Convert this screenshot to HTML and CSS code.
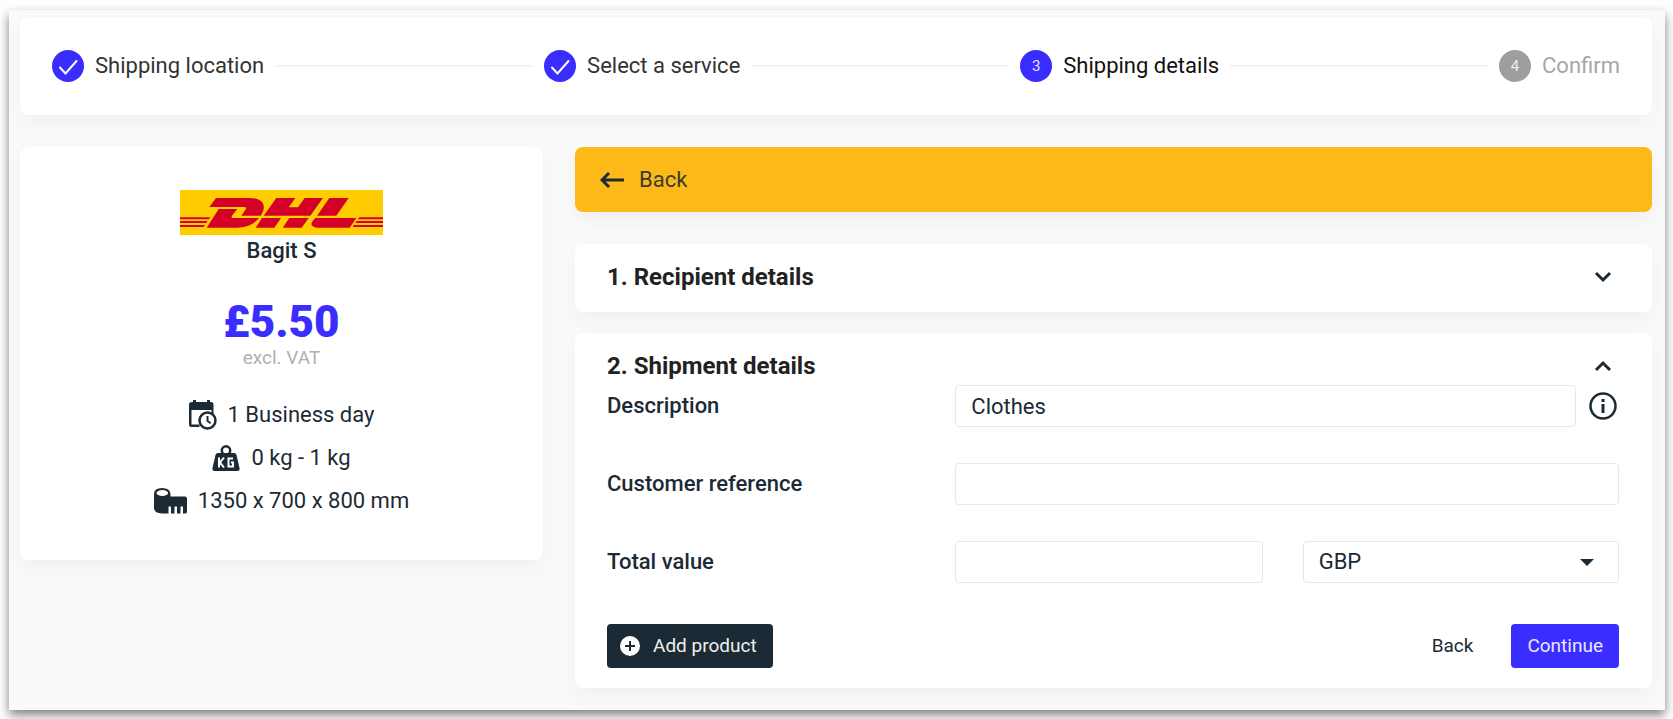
FILE: index.html
```html
<!DOCTYPE html>
<html lang="en">
<head>
<meta charset="utf-8">
<meta name="viewport" content="width=device-width, initial-scale=1">
<title>Shipping details</title>
<link rel="stylesheet" href="styles.css">
</head>
<body>
<main class="panel">
  <ol class="card steps">
    <li class="step">
      <span class="badge"><svg class="tick" viewBox="0 0 32 32" aria-hidden="true"><path d="M8 17.500l5.500 6L24.500 11"/></svg></span>
      <span>Shipping location</span>
    </li>
    <li class="rule" aria-hidden="true"></li>
    <li class="step">
      <span class="badge"><svg class="tick" viewBox="0 0 32 32" aria-hidden="true"><path d="M8 17.500l5.500 6L24.500 11"/></svg></span>
      <span>Select a service</span>
    </li>
    <li class="rule" aria-hidden="true"></li>
    <li class="step step-current" aria-current="step">
      <span class="badge">3</span>
      <span>Shipping details</span>
    </li>
    <li class="rule" aria-hidden="true"></li>
    <li class="step step-pending">
      <span class="badge">4</span>
      <span>Confirm</span>
    </li>
  </ol>

  <div class="columns">
    <aside class="card summary">
      <svg class="logo" viewBox="0 0 609 135" role="img" aria-label="DHL">
        <rect width="609" height="135" fill="#fc0"/>
        <g fill="#d40026">
          <path d="M108 24H208C250 24 262 48 242 77H184L197 58Q201 51 193 51H88Z"/>
          <path d="M116 57H172L156 77Q152 84 160 84H237Q214 113 170 113H80Z"/>
          <path d="M289 24H346L326 52H354L374 24H429L391 77H251Z"/>
          <path d="M246 84H303L283 113H227ZM328 84H386L365 113H308Z"/>
          <path d="M448 24H506L469 77H411Z"/>
          <path d="M406 84H529L509 113H412Q380 109 406 84Z"/>
          <path d="M0 82H91L87 88H0ZM0 93H83L79 99H0ZM0 105H75L71 111H0Z"/>
          <path d="M538 82H609V88H534ZM530 93H609V99H526ZM522 105H609V111H518Z"/>
        </g>
      </svg>
      <h1 class="service">Bagit S</h1>
      <p class="price">£5.50</p>
      <p class="vat">excl. VAT</p>
      <ul class="facts">
        <li>
          <svg class="icon-day" viewBox="0 0 28 30" aria-hidden="true">
            <path d="M3 2h1V0h3v2h11V0h3v2h1q2.500 0 2.500 2.500V14H22.500V10H2.500V24.500h8V27H2.500Q0 27 0 24.500V4.500Q0 2 3 2Z"/>
            <circle cx="18.500" cy="20.500" r="8" class="ring"/>
            <path d="M18.500 16v5l3.200 2.200" class="hand"/>
          </svg>
          <span>1 Business day</span>
        </li>
        <li>
          <svg class="icon-kg" viewBox="0 0 28 26" aria-hidden="true">
            <circle cx="14" cy="5.500" r="4.200" class="loop"/>
            <path d="M6 8H22Q24 8 24.500 10L27.500 23Q28 26 25.500 26H2.500Q0 26 .5 23L3.500 10Q4 8 6 8Z"/>
            <path d="M7 12.500v10M12 12.500l-4 5 4 5M21 13.500h-4.500v8H21v-4h-2" class="mark"/>
          </svg>
          <span>0 kg - 1 kg</span>
        </li>
        <li>
          <svg class="icon-tape" viewBox="0 0 33 26" aria-hidden="true">
            <path d="M0 6Q0 0 8 0T16.500 6V8.500H31Q33 8.500 33 10.500V24Q33 25.500 31 25.500H29V18.500H26.500V25.500H23V18.500H20.500V25.500H17V18.500H14.500V25.500H8Q0 25 0 20Z"/>
            <ellipse cx="8.300" cy="5" rx="5.800" ry="3" fill="#fff"/>
          </svg>
          <span>1350 x 700 x 800 mm</span>
        </li>
      </ul>
    </aside>

    <div class="content">
      <button type="button" class="back-bar">
        <svg class="arrow" viewBox="0 0 25 18" aria-hidden="true"><path d="M24 9H2M9 2L2 9l7 7"/></svg>
        <span>Back</span>
      </button>

      <section class="card section">
        <h2><button type="button" class="section-head" aria-expanded="false">
          <span>1. Recipient details</span>
          <svg class="chevron" viewBox="0 0 18 12" aria-hidden="true"><path d="M2 2l7 7 7-7"/></svg>
        </button></h2>
      </section>

      <section class="card section section-open">
        <h2><button type="button" class="section-head" aria-expanded="true">
          <span>2. Shipment details</span>
          <svg class="chevron" viewBox="0 0 18 12" aria-hidden="true"><path d="M2 10l7-7 7 7"/></svg>
        </button></h2>
        <form class="form">
          <div class="row">
            <label for="description">Description</label>
            <div class="field">
              <input id="description" class="control" type="text" value="Clothes">
              <button type="button" class="info" aria-label="About the description">
                <svg viewBox="0 0 28 28" aria-hidden="true"><circle cx="14" cy="14" r="12.500"/><path d="M14 12v9M14 7v3" class="letter"/></svg>
              </button>
            </div>
          </div>
          <div class="row">
            <label for="reference">Customer reference</label>
            <div class="field"><input id="reference" class="control" type="text"></div>
          </div>
          <div class="row">
            <label for="total">Total value</label>
            <div class="field field-split">
              <input id="total" class="control" type="text">
              <div class="select">
                <select id="currency" class="control" aria-label="Currency"><option>GBP</option></select>
                <svg class="caret" viewBox="0 0 14 7" aria-hidden="true"><path d="M0 0h14L7 7z"/></svg>
              </div>
            </div>
          </div>
          <div class="actions">
            <button type="button" class="btn btn-dark">
              <svg class="plus" viewBox="0 0 20 20" aria-hidden="true"><circle cx="10" cy="10" r="10"/><path d="M10 5v10M5 10h10"/></svg>
              <span>Add product</span>
            </button>
            <button type="button" class="btn btn-plain">Back</button>
            <button type="submit" class="btn btn-primary">Continue</button>
          </div>
        </form>
      </section>
    </div>
  </div>
</main>
</body>
</html>
```
FILE: styles.css
```css
:root {
  --blue: #3a2dff;
  --ink: #1c2a35;
  --line: #e8e8e8;
}

* {
  box-sizing: border-box;
}

body {
  margin: 0;
  padding: 10px 8px 9px 9px;
  background: #fff;
  color: var(--ink);
  font: 400 22px/28px Roboto, "Liberation Sans", sans-serif;
}

h1, h2, p, ul, ol {
  margin: 0;
  padding: 0;
  list-style: none;
}

button, input, select {
  font: inherit;
  color: inherit;
}

button {
  border: 0;
  background: none;
  cursor: pointer;
}

svg {
  display: block;
  flex: none;
}

.panel {
  padding: 7px 13px 22px 11px;
  background: #fafafa;
  box-shadow: 0 5px 10px rgba(0, 0, 0, .5);
}

.card {
  border-radius: 8px;
  background: #fff;
  box-shadow: 0 8px 20px rgba(20, 60, 50, .05);
}

/* Progress steps */
.steps {
  display: flex;
  align-items: center;
  gap: 11px;
  padding: 33px 32px;
  color: #333;
}

.step {
  display: flex;
  align-items: center;
  gap: 11px;
  line-height: 32px;
}

.step-current {
  color: #111;
}

.step-pending {
  color: #a6a6a6;
}

.badge {
  width: 32px;
  height: 32px;
  border-radius: 50%;
  background: var(--blue);
  color: #e4e2ff;
  font-size: 15px;
  text-align: center;
}

.step-pending .badge {
  background: #9e9e9e;
  color: #eee;
}

.tick path {
  fill: none;
  stroke: #fff;
  stroke-width: 2;
  stroke-linecap: round;
}

.rule {
  flex: 1;
  height: 2px;
  background: #f3f3f3;
}

/* Columns */
.columns {
  display: grid;
  grid-template-columns: 523fr 1077fr;
  align-items: start;
  gap: 32px;
  margin-top: 32px;
}

/* Service summary */
.summary {
  display: flex;
  flex-direction: column;
  align-items: center;
  padding: 43px 20px;
}

.logo {
  width: 203px;
  height: 45px;
}

.service {
  margin-top: 2px;
  font-size: 22px;
  font-weight: 500;
  line-height: 28px;
}

.price {
  margin-top: 33px;
  color: var(--blue);
  font-size: 44px;
  font-weight: 900;
  line-height: 48px;
}

.vat {
  color: #b0b0b0;
  font-size: 19px;
  line-height: 24px;
}

.facts {
  display: grid;
  gap: 11px;
  margin-top: 29px;
}

.facts li {
  display: flex;
  align-items: center;
  justify-content: center;
  gap: 11px;
  height: 32px;
}

.facts svg {
  fill: var(--ink);
}

.icon-day {
  width: 28px;
  height: 30px;
}

.icon-kg {
  width: 28px;
  height: 26px;
}

.icon-tape {
  width: 33px;
  height: 26px;
}

.icon-day .ring {
  fill: #fff;
  stroke: var(--ink);
  stroke-width: 2.500;
}

.icon-day .hand {
  fill: none;
  stroke: var(--ink);
  stroke-width: 2;
}

.icon-kg .loop {
  fill: none;
  stroke: var(--ink);
  stroke-width: 2.500;
}

.icon-kg .mark {
  fill: none;
  stroke: #fff;
  stroke-width: 2;
}

/* Main content */
.back-bar {
  display: flex;
  align-items: center;
  gap: 14px;
  width: 100%;
  height: 65px;
  padding: 0 25px;
  border-radius: 8px;
  background: #fdb917;
  box-shadow: 0 8px 20px rgba(0, 0, 0, .05);
  color: #3a3d2f;
}

.arrow {
  width: 25px;
  height: 18px;
  fill: none;
  stroke: var(--ink);
  stroke-width: 3;
}

.section {
  margin-top: 32px;
}

.section-open {
  margin-top: 21px;
}

.section-head {
  display: flex;
  align-items: center;
  justify-content: space-between;
  width: 100%;
  padding: 19px 40px 21px 32px;
  color: #222;
  font-size: 24px;
  font-weight: 700;
  line-height: 28px;
  text-align: left;
}

.section-open .section-head {
  padding-bottom: 5px;
}

.chevron {
  width: 18px;
  height: 12px;
  fill: none;
  stroke: var(--ink);
  stroke-width: 3;
}

.form {
  display: grid;
  gap: 36px;
  padding: 0 33px 20px 32px;
}

.row {
  display: grid;
  grid-template-columns: 348fr 663fr;
  align-items: center;
}

.row label {
  font-weight: 500;
}

.field {
  display: flex;
  align-items: center;
  gap: 13px;
}

.field-split {
  display: grid;
  grid-template-columns: 307fr 316fr;
  gap: 40px;
}

.control {
  width: 100%;
  min-width: 0;
  height: 42px;
  padding: 0 15px;
  border: 1px solid var(--line);
  border-radius: 4px;
  background: #fff;
}

.info {
  padding: 0 2px 0 0;
}

.info svg {
  width: 28px;
  height: 28px;
  fill: none;
  stroke: var(--ink);
  stroke-width: 2.500;
}

.info .letter {
  stroke-width: 3;
}

.select {
  position: relative;
}

.select .control {
  appearance: none;
}

.caret {
  position: absolute;
  top: 18px;
  right: 25px;
  width: 14px;
  height: 7px;
  fill: var(--ink);
  pointer-events: none;
}

.actions {
  display: flex;
  align-items: center;
  gap: 22px;
  padding-top: 5px;
}

.btn {
  display: flex;
  align-items: center;
  gap: 13px;
  height: 44px;
  padding: 0 16px;
  border-radius: 4px;
  font-size: 19px;
}

.btn-dark {
  margin-right: auto;
  padding-left: 13px;
  background: var(--ink);
  color: #eee;
}

.btn-primary {
  background: var(--blue);
  color: #eae8ff;
}

.plus {
  width: 20px;
  height: 20px;
  fill: #fff;
  stroke: var(--ink);
  stroke-width: 2;
}

.plus circle {
  stroke: none;
}
```
